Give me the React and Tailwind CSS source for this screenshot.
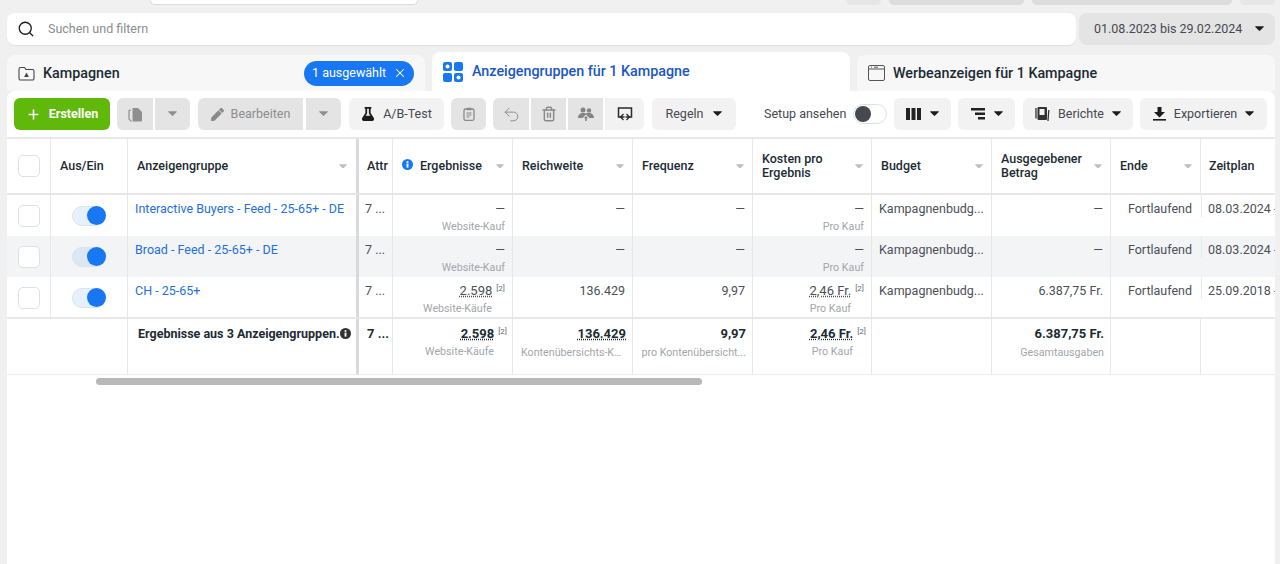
import { Search, X, Plus, Undo2, Trash2 } from "lucide-react";
import { FaFlask, FaPen } from "react-icons/fa";

const GRID =
  "grid grid-cols-[44px_77px_231px_34px_120px_120px_120px_119px_120px_119px_90px_74px]";

function Caret({ className = "text-[#1c1c1c]", w = 12 }) {
  return (
    <svg width={w} height={w * 0.6} viewBox="0 0 10 6" className={className}>
      <path d="M0.6 0.4h8.8a.4.4 0 0 1 .3.7L5.4 5.4a.6.6 0 0 1-.8 0L.3 1.1a.4.4 0 0 1 .3-.7z" fill="currentColor" />
    </svg>
  );
}

function Btn({ children, className = "", bg = "bg-[#f2f2f2]" }) {
  return (
    <div className={`h-8 flex items-center justify-center rounded-md shrink-0 ${bg} ${className}`}>
      {children}
    </div>
  );
}

function InfoDot({ className }) {
  return (
    <svg width="11" height="11" viewBox="0 0 12 12" className={className}>
      <circle cx="6" cy="6" r="6" fill="currentColor" />
      <rect x="5" y="5" width="2" height="4.4" fill="#fff" />
      <rect x="5" y="2.4" width="2" height="1.8" fill="#fff" />
    </svg>
  );
}

function Note() {
  return <sup className="text-[8px] font-normal text-[#606770] ml-1 -top-1">[2]</sup>;
}

function HeadCell({ children, sort = true, info, last }) {
  return (
    <div className={`flex items-center pr-[8px] font-medium text-[12.5px] leading-[14px] text-[#1c2b33] ${last ? "pl-[8px]" : "pl-[9px] border-r border-[#e8e8e8]"}`}>
      {info && <InfoDot className="text-[#1877f2] mr-[7px] -mt-[3px] shrink-0" />}
      <span className="flex-1">{children}</span>
      {sort && <Caret className="text-[#bcc0c4] ml-1 shrink-0" w={8} />}
    </div>
  );
}

function Check() {
  return (
    <div className="flex justify-center border-r border-[#e8e8e8] pt-[10px]">
      <div className="w-[22px] h-[22px] bg-white rounded-[5px] border border-[#dfe0e1]" />
    </div>
  );
}

function Toggle({ dark }) {
  return (
    <div className="flex justify-center border-r border-[#e8e8e8] pt-[11px]">
      <div className={`w-[34px] h-[20px] rounded-full flex justify-end ${dark ? "bg-[#dce6f5]" : "bg-[#e7f0fd]"} border border-[#dde3ea]`}>
        <div className="w-[19px] h-[19px] -m-px rounded-full bg-[#1877f2]" />
      </div>
    </div>
  );
}

function Num({ value, sub }) {
  return (
    <div className="border-r border-[#e8e8e8] pr-[7px] pl-2 pt-[6px] text-right overflow-hidden">
      <div className="text-[12.5px] leading-4 whitespace-nowrap text-[#4b4f56]">{value}</div>
      {sub && <div className="text-[10.7px] leading-3 mt-[4px] text-[#a3a6aa] truncate">{sub}</div>}
    </div>
  );
}

// value with the dotted underline and the [2] note
function NoteNum({ value, sub, bold, pr, subMr, pt }) {
  return (
    <div className={`border-r border-[#e8e8e8] text-right ${pr} ${pt}`}>
      <div className={`text-[13px] leading-4 ${bold ? "font-bold text-[#1c2b33]" : "text-[#4b4f56]"}`}>
        <span className="underline decoration-dotted underline-offset-1">{value}</span>
        <Note />
      </div>
      <div className={`text-[10.7px] leading-3 mt-[4px] text-[#a3a6aa] ${subMr}`}>{sub}</div>
    </div>
  );
}

function SumCell({ value, sub, dotted, subMr = "" }) {
  return (
    <div className="border-r border-[#e8e8e8] pl-2 pr-[6px] pt-[7px] text-right">
      <div className={`text-[13px] leading-4 font-bold ${dotted ? "underline decoration-dotted underline-offset-1" : ""}`}>{value}</div>
      <div className={`text-[10.7px] leading-3 mt-[5px] text-[#a3a6aa] truncate ${subMr}`}>{sub}</div>
    </div>
  );
}

function Text({ children, className = "" }) {
  return (
    <div className={`border-r border-[#e8e8e8] pt-[6px] text-[12.5px] leading-4 whitespace-nowrap overflow-hidden text-[#4b4f56] ${className}`}>
      {children}
    </div>
  );
}

function NameCell({ children }) {
  return (
    <div className="border-r-[3px] border-[#d9dadb] pl-[7px] pt-[6px] text-[12.5px] leading-4 text-[#2470d9] whitespace-nowrap">{children}</div>
  );
}

function Ende() {
  return <div className="pt-[6px] pr-[9px] text-right text-[12.5px] leading-4 text-[#4b4f56]">Fortlaufend</div>;
}

function Zeitplan({ date }) {
  return (
    <div className="flex text-[12.5px] leading-4 text-[#4b4f56] whitespace-nowrap overflow-hidden">
      <div className="w-px h-[22px] bg-[#e8e8e8] shrink-0" />
      <div className="pl-[6px] pt-[6px]">{date}</div>
    </div>
  );
}

const rows = [
  { name: "Interactive Buyers - Feed - 25-65+ - DE", date: "08.03.2024 -" },
  { name: "Broad - Feed - 25-65+ - DE", date: "08.03.2024 -", dark: true },
];

export default function App() {
  return (
    <div className="w-[1280px] h-[564px] overflow-hidden bg-[#f0f0f0] flex flex-col font-['Roboto',sans-serif] text-[#1c2b33]">
      {/* strip left over from the page header */}
      <div className="h-[5px] flex shrink-0">
        <div className="ml-[150px] w-[268px] bg-white rounded-b-lg border border-t-0 border-[#dcdcdc]" />
        <div className="ml-[428px] w-[35px] bg-[#e6e6e6] rounded-b-md" />
        <div className="ml-[8px] w-[135px] bg-[#dcdcdc] rounded-b-md" />
        <div className="ml-[8px] w-[200px] bg-[#dcdcdc] rounded-b-md" />
        <div className="ml-[8px] w-[35px] bg-[#e6e6e6] rounded-b-md" />
      </div>

      <div className="flex mt-2 ml-[7px] mr-[5px] gap-[3px] h-8 shrink-0">
        <div className="flex-1 bg-white rounded-lg flex items-center pl-[10px] shadow-[0_1px_1px_rgba(0,0,0,0.08)]">
          <Search size={18} strokeWidth={1.7} className="text-[#1c1c1c]" />
          <span className="ml-[13px] text-[12.5px] text-[#8a8d91]">Suchen und filtern</span>
        </div>
        <div className="w-[196px] bg-[#e4e4e4] rounded-lg flex items-center pl-[15px] text-[12.5px] text-[#444950]">
          <span className="flex-1">01.08.2023 bis 29.02.2024</span>
          <Caret className="text-[#1c1c1c] mr-[11px]" w={9} />
        </div>
      </div>

      {/* Tabs */}
      <div className="flex mx-[5px] ml-[7px] gap-[7px] mt-[7px] h-[39px] shrink-0 items-end">
        <div className="w-[418px] h-9 bg-[#f7f7f7] rounded-t-lg flex items-center pl-[11px] pr-[11px]">
          <svg width="17" height="15" viewBox="0 0 17 15" fill="none" className="text-[#444]">
            <path d="M1 3a1.5 1.5 0 0 1 1.5-1.5h4l1.5 2h6.5A1.5 1.5 0 0 1 16 5v7.5a1.5 1.5 0 0 1-1.5 1.5h-12A1.5 1.5 0 0 1 1 12.5z" stroke="currentColor" strokeWidth="1.1" />
            <path d="M8.5 6.6l2.4 4.4H6.1z" fill="currentColor" />
          </svg>
          <span className="ml-[8px] text-[14.3px] font-medium text-[#1c2b33] flex-1 pt-[2px]">Kampagnen</span>
          <div className="w-[110px] h-[25px] rounded-full bg-[#1877f2] text-white flex items-center pl-2 text-[12.5px]">
            <span className="flex-1">1 ausgewählt</span>
            <X size={14} strokeWidth={1.8} className="mr-[7px]" />
          </div>
        </div>
        <div className="w-[418px] h-[39px] bg-white rounded-t-lg flex items-center pl-[11px]">
          <svg width="20" height="20" viewBox="0 0 20 20">
            <rect x="0" y="0" width="9" height="9" rx="2" fill="#1877f2" />
            <circle cx="4.5" cy="4.5" r="2" fill="#fff" />
            <rect x="11" y="0" width="9" height="9" rx="2" fill="#1877f2" />
            <rect x="0" y="11" width="9" height="9" rx="2" fill="#1877f2" />
            <rect x="11" y="11" width="9" height="9" rx="2" fill="#1877f2" />
            <circle cx="15.5" cy="15.5" r="2" fill="#fff" />
          </svg>
          <span className="ml-[9px] text-[14.3px] font-medium text-[#1a56c4]">Anzeigengruppen für 1 Kampagne</span>
        </div>
        <div className="w-[418px] h-9 bg-[#f7f7f7] rounded-t-lg flex items-center pl-[11px]">
          <svg width="17" height="16" viewBox="0 0 17 16" fill="none" className="text-[#555]">
            <rect x="0.5" y="0.5" width="16" height="15" rx="1.5" stroke="currentColor" />
            <path d="M0.5 4h16" stroke="currentColor" />
            <path d="M3 2.2h1M6 2.2h4" stroke="currentColor" />
          </svg>
          <span className="ml-[8px] text-[14.3px] font-medium text-[#1c2b33] pt-[2px]">Werbeanzeigen für 1 Kampagne</span>
        </div>
      </div>

      {/* Panel */}
      <div className="flex-1 ml-[7px] mr-[5px] bg-white rounded-t-lg">
        <div className="flex items-center h-[48px] pl-[7px] border-b-2 border-[#e8e8e8]">
          <Btn bg="bg-[#5fb80a]" className="w-[96px] text-white text-[12.5px] font-bold gap-[8px]">
            <Plus size={15} strokeWidth={2.5} />
            Erstellen
          </Btn>
          <div className="flex ml-[7px] gap-[2px]">
            <Btn bg="bg-[#e4e4e4]" className="w-[36px] rounded-r-none">
              <svg width="15" height="15" viewBox="0 0 15 15" className="text-[#8f8f8f]">
                <path d="M5 1h5l4 4v8.5a1 1 0 0 1-1 1H5.500a1 1 0 0 1-1-1V2a1 1 0 0 1 .5-1z" fill="currentColor" />
                <path d="M3 3 1 3.500v8.500l2.600 2.600" fill="none" stroke="currentColor" strokeWidth="1.2" />
              </svg>
            </Btn>
            <Btn bg="bg-[#e4e4e4]" className="w-[35px] rounded-l-none"><Caret className="text-[#8f8f8f]" w={9} /></Btn>
          </div>
          <div className="flex ml-[8px] gap-[3px]">
            <Btn bg="bg-[#e4e4e4]" className="w-[105px] rounded-r-none gap-[7px] text-[12.5px] text-[#8d8d8d]">
              <FaPen size={13} className="text-[#8a8a8a]" />
              Bearbeiten
            </Btn>
            <Btn bg="bg-[#e4e4e4]" className="w-[35px] rounded-l-none"><Caret className="text-[#8f8f8f]" w={9} /></Btn>
          </div>
          <Btn className="w-[95px] ml-[8px] gap-2 text-[12.5px] text-[#444950]">
            <FaFlask size={14} className="text-[#1c1c1c]" />
            A/B-Test
          </Btn>
          <Btn bg="bg-[#e4e4e4]" className="w-[35px] ml-[7px]">
            <svg width="12" height="14" viewBox="0 0 12 14" fill="none" className="text-[#8a8a8a]">
              <rect x="1" y="2" width="10" height="11.300" rx="1.500" stroke="currentColor" strokeWidth="1.300" />
              <rect x="3.500" y="0.700" width="5" height="2.500" rx="0.800" fill="currentColor" />
              <path d="M3.500 6h5M3.500 8h5M3.500 10h3" stroke="currentColor" />
            </svg>
          </Btn>
          <div className="flex ml-[7px] gap-[2px]">
            <Btn bg="bg-[#e4e4e4]" className="w-[36px] rounded-r-none">
              <Undo2 size={19} strokeWidth={1.200} className="text-[#8a8a8a]" />
            </Btn>
            <Btn bg="bg-[#e4e4e4]" className="w-[35px] rounded-none">
              <Trash2 size={16} strokeWidth={2.200} className="text-[#8a8a8a]" />
            </Btn>
            <Btn bg="bg-[#e4e4e4]" className="w-[35px] rounded-none">
              <svg width="16" height="14" viewBox="0 0 16 14" className="text-[#858585]">
                <circle cx="5" cy="3" r="2.500" fill="currentColor" />
                <circle cx="11" cy="3.500" r="2.200" fill="currentColor" />
                <path d="M0 11c0-3 2-5 5-5 2 0 3 .6 3 .6S9 6 11 6c3 0 5 2 5 5h-4.500L8 7.600 4.500 11z" fill="currentColor" />
                <path d="M8 9l2.200 2.200H8.800V14H7.200v-2.800H5.800z" fill="currentColor" />
              </svg>
            </Btn>
            <Btn className="w-[39px] rounded-l-none">
              <svg width="16" height="15" viewBox="0 0 16 15" fill="none" className="text-[#2b2b2b]">
                <path d="M4 10H1.500V1h13v9H12" stroke="currentColor" strokeWidth="1.500" />
                <path d="M6.500 7 3.500 10l3 3M4 10h3.500M9.500 7l3 3-3 3M12 10H8.500" stroke="currentColor" strokeWidth="1.300" />
              </svg>
            </Btn>
          </div>
          <Btn className="w-[84px] ml-[8px] gap-[10px] text-[12.5px] text-[#444950]">
            Regeln
            <Caret w={9} />
          </Btn>
          <span className="ml-[28px] w-[83px] shrink-0 whitespace-nowrap text-[12.5px] text-[#444950]">Setup ansehen</span>
          <div className="ml-[6px] w-[34px] h-[20px] bg-white rounded-full border border-[#dddfe2] flex items-center pl-px shrink-0">
            <div className="w-[16px] h-[16px] rounded-full bg-[#444950]" />
          </div>
          <Btn className="w-[57px] ml-[7px] gap-[9px]">
            <svg width="15" height="12" viewBox="0 0 15 12" fill="#222"><rect width="4" height="12" /><rect x="5.500" width="4" height="12" /><rect x="11" width="4" height="12" /></svg>
            <Caret w={9} />
          </Btn>
          <Btn className="w-[57px] ml-[7px] gap-[9px]">
            <svg width="14" height="12" viewBox="0 0 14 12" fill="#222"><rect width="14" height="2.500" /><rect x="4" y="4.500" width="10" height="2.500" /><rect x="7" y="9" width="7" height="2.500" /></svg>
            <Caret w={9} />
          </Btn>
          <Btn className="w-[110px] ml-[8px] gap-[8px] text-[12.5px] text-[#444950]">
            <svg width="15" height="15" viewBox="0 0 15 15" className="text-[#333]">
              <rect x="2.500" y="0" width="9.500" height="13" rx="1" fill="currentColor" />
              <path d="M1 1v10.500M13.800 3l-.8 11" stroke="currentColor" strokeWidth="1.300" fill="none" />
              <rect x="4.500" y="2" width="5" height="6" fill="#f2f2f2" />
            </svg>
            Berichte
            <Caret w={9} />
          </Btn>
          <Btn className="w-[127px] ml-[7px] gap-[8px] text-[12.5px] text-[#444950]">
            <svg width="13" height="14" viewBox="0 0 13 14" fill="#1c1c1c">
              <path d="M4.500 0h4v5H12L6.500 10.500 1 5h3.500z" />
              <rect x="0" y="12" width="13" height="1.600" />
            </svg>
            Exportieren
            <Caret w={9} />
          </Btn>
        </div>

        <div className={`${GRID} h-[56px] border-b-2 border-[#e6e6e6]`}>
          <div className="flex items-center justify-center border-r border-[#e8e8e8]">
            <div className="w-[22px] h-[22px] rounded-[5px] border border-[#dfe0e1]" />
          </div>
          <HeadCell sort={false}>Aus/Ein</HeadCell>
          <div className="flex items-center pl-[9px] pr-[9px] font-medium text-[12.5px] text-[#1c2b33] border-r-[3px] border-[#d9dadb]">
            <span className="flex-1">Anzeigengruppe</span>
            <Caret className="text-[#bcc0c4]" w={8} />
          </div>
          <div className="flex items-center pl-[8px] font-medium text-[12.5px] border-r border-[#e8e8e8]">Attr</div>
          <HeadCell info>Ergebnisse</HeadCell>
          <HeadCell>Reichweite</HeadCell>
          <HeadCell>Frequenz</HeadCell>
          <HeadCell>Kosten pro<br />Ergebnis</HeadCell>
          <HeadCell>Budget</HeadCell>
          <HeadCell>Ausgegebener<br />Betrag</HeadCell>
          <HeadCell>Ende</HeadCell>
          <HeadCell sort={false} last>Zeitplan</HeadCell>
        </div>

        {rows.map((r) => (
          <div key={r.name} className={`${GRID} h-[41px] ${r.dark ? "bg-[#f3f4f6]" : ""}`}>
            <Check />
            <Toggle dark={r.dark} />
            <NameCell>{r.name}</NameCell>
            <Text className="pl-[6px]">7 ...</Text>
            <Num value="—" sub="Website-Kauf" />
            <Num value="—" />
            <Num value="—" />
            <Num value="—" sub="Pro Kauf" />
            <Text className="pl-[7px]">Kampagnenbudg...</Text>
            <Num value="—" />
            <Ende />
            <Zeitplan date={r.date} />
          </div>
        ))}

        <div className={`${GRID} h-[42px] border-b-2 border-[#e8e8e8]`}>
          <Check />
          <Toggle />
          <NameCell>CH - 25-65+</NameCell>
          <Text className="pl-[6px]">7 ...</Text>
          <NoteNum value="2.598" sub="Website-Käufe" pr="pr-[7px]" subMr="mr-[13px]" pt="pt-[6px]" />
          <Num value="136.429" />
          <Num value="9,97" />
          <NoteNum value="2,46 Fr." sub="Pro Kauf" pr="pr-[7px]" subMr="mr-[13px]" pt="pt-[6px]" />
          <Text className="pl-[7px]">Kampagnenbudg...</Text>
          <Num value="6.387,75 Fr." />
          <Ende />
          <Zeitplan date="25.09.2018 -" />
        </div>

        <div className={`${GRID} h-[56px] border-b border-[#ececec]`}>
          <div className="col-span-2 border-r border-[#e8e8e8]" />
          <div className="border-r-[3px] border-[#d9dadb] pl-[10px] pt-[7px] text-[12.5px] leading-4 font-bold text-[#1c2b33] whitespace-nowrap flex items-start">
            Ergebnisse aus 3 Anzeigengruppen.
            <InfoDot className="text-[#333] mt-[2px] shrink-0" />
          </div>
          <div className="border-r border-[#e8e8e8] pl-[8px] pt-[7px] text-[13px] leading-4 font-bold whitespace-nowrap overflow-hidden">7 ...</div>
          <NoteNum bold value="2.598" sub="Website-Käufe" pr="pr-[5px]" subMr="mr-[13px]" pt="pt-[7px]" />
          <SumCell dotted value="136.429" sub="Kontenübersichts-K..." subMr="mr-[4px]" />
          <SumCell value="9,97" sub="pro Kontenübersicht..." />
          <NoteNum bold value="2,46 Fr." sub="Pro Kauf" pr="pr-[5px]" subMr="mr-[13px]" pt="pt-[7px]" />
          <div className="border-r border-[#e8e8e8]" />
          <SumCell value="6.387,75 Fr." sub="Gesamtausgaben" />
          <div className="border-r border-[#e8e8e8]" />
          <div />
        </div>

        <div className="mt-[3px] ml-[89px] w-[606px] h-[7px] rounded-full bg-[#b8b8b8]" />
      </div>
    </div>
  );
}
